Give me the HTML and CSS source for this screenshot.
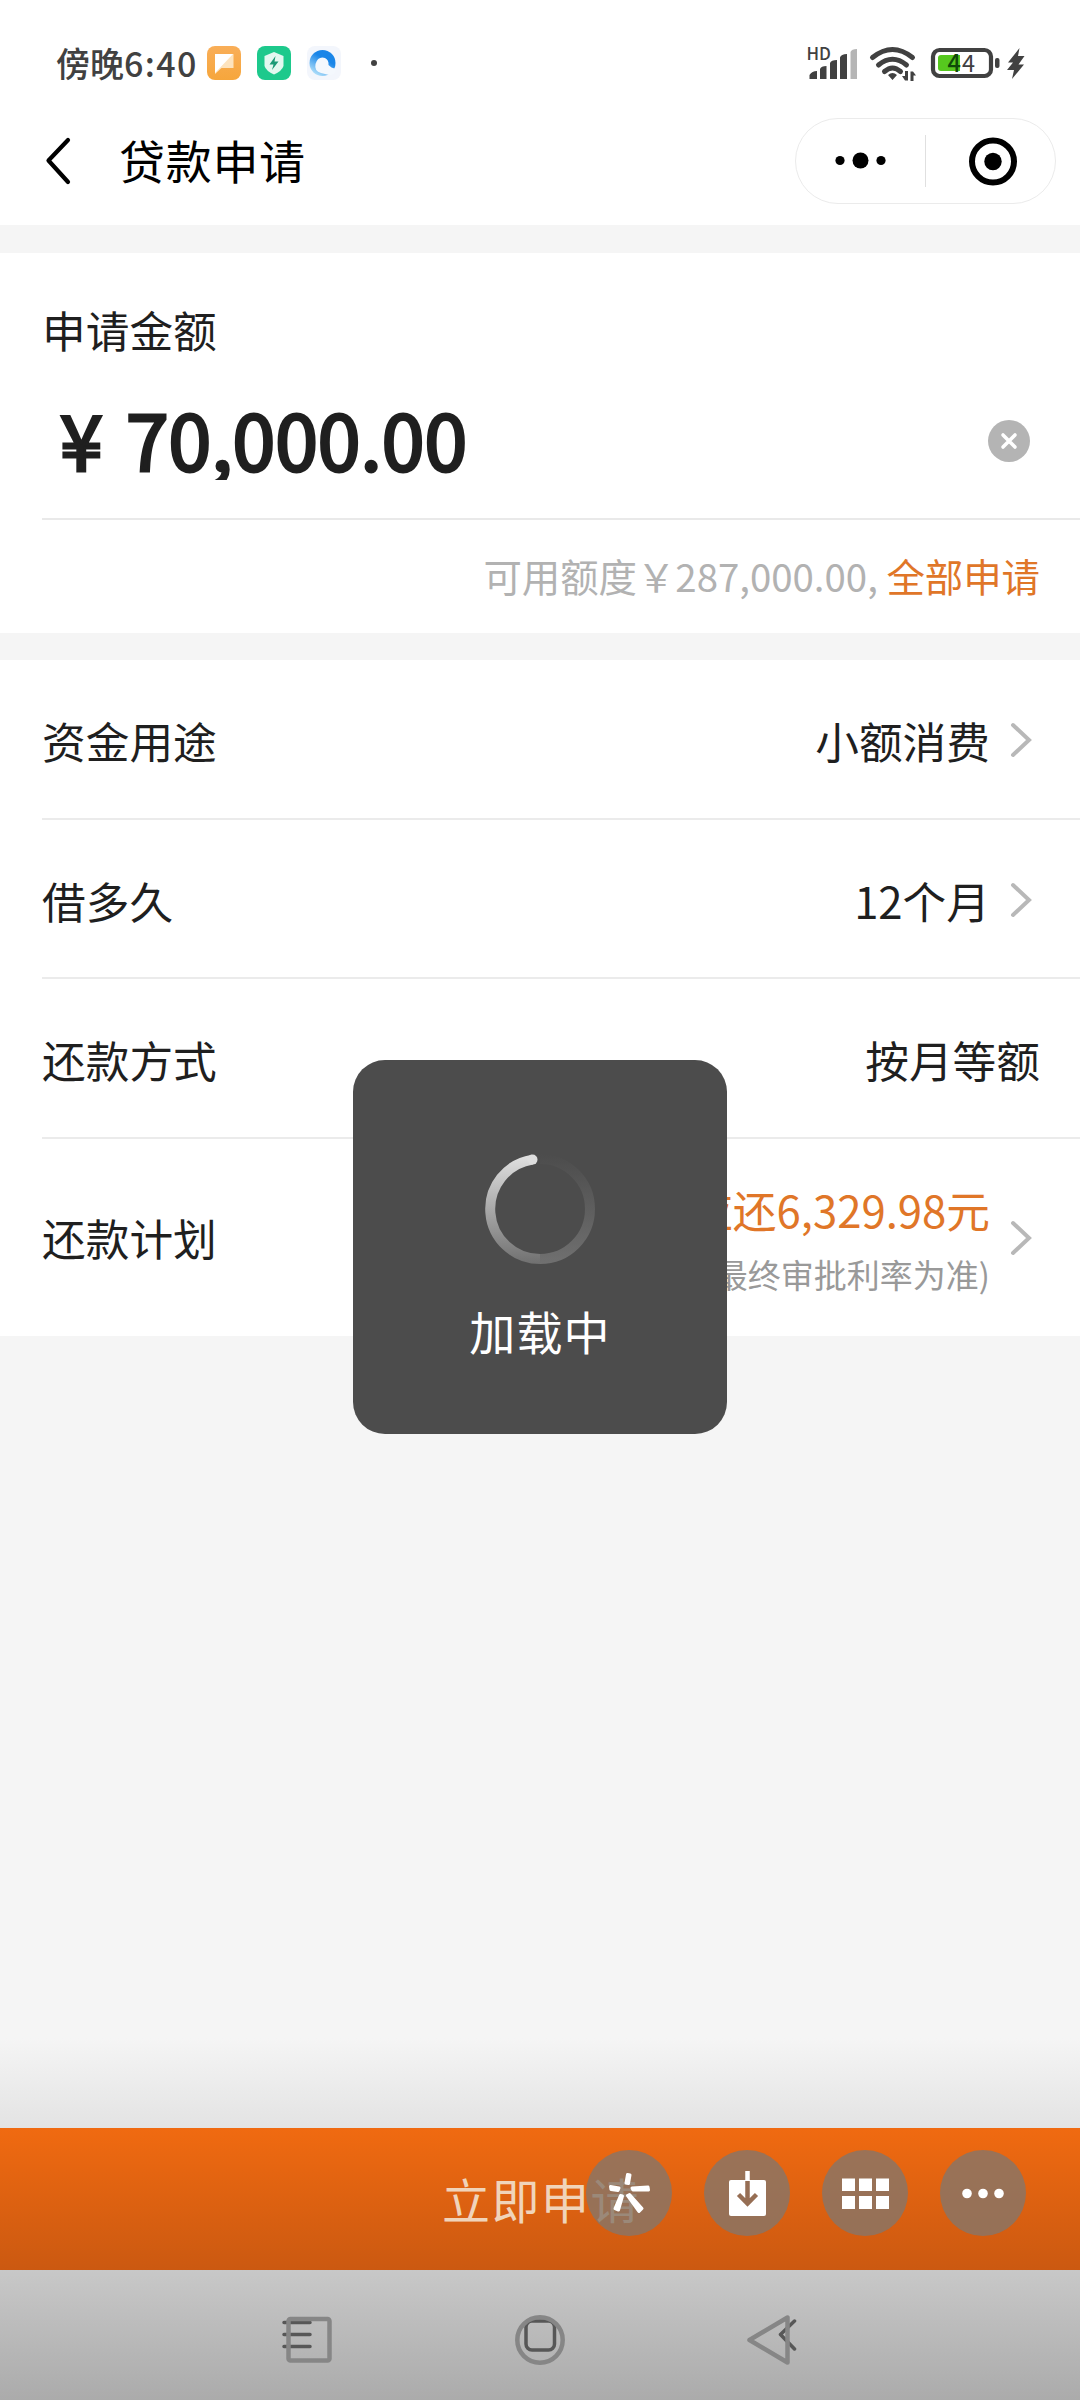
FILE: index.html
```html
<!DOCTYPE html>
<html lang="zh-CN">
<head>
<meta charset="utf-8">
<title>贷款申请</title>
<link rel="stylesheet" href="styles.css">
</head>
<body>
<div class="screen">
  <div class="status">
    <span class="clock">傍晚<span class="digits">6:40</span></span>
    <svg class="app-icon" viewBox="0 0 34 34"><defs><linearGradient id="og" x1="0" y1="0" x2="0" y2="1"><stop offset="0" stop-color="#f9ae58"/><stop offset="1" stop-color="#f6a63c"/></linearGradient></defs><rect width="34" height="34" rx="8" fill="url(#og)"/><path d="M8 8H26.500V22H14.500L8 28Z" fill="#fde3bd"/><path d="M8 8H26L8 27Z" fill="#fff"/></svg>
    <svg class="app-icon" viewBox="0 0 34 34"><rect width="34" height="34" rx="8" fill="#1dc98c"/><path d="M17 6L26.500 10V20Q25 25 17 28.500Q9 25 7.500 20V10Z" fill="#e2f8f0"/><path d="M18.500 10L12.500 18.500H16.500L15 24L21.500 15.500H17.500Z" fill="#1a9a76"/></svg>
    <svg class="app-icon" viewBox="0 0 34 34"><defs><linearGradient id="bg" x1="0.800" y1="0" x2="0.200" y2="1"><stop offset="0.350" stop-color="#1a86e8"/><stop offset="1" stop-color="#bfe8fb"/></linearGradient></defs><rect width="34" height="34" rx="8" fill="#f3f6fc"/><circle cx="15.500" cy="17" r="13" fill="url(#bg)"/><path d="M14 27Q7 25 8.500 18Q11 10 18 12Q22 14 21.500 19L24.500 21.500L29 23Q28 29 22 29Z" fill="#f4f8fd"/></svg>
    <i class="more-dot"></i>
    <svg class="signals" viewBox="800 40 230 46">
      <text class="hd" x="806.500" y="59.500">HD</text>
      <g fill="#414141"><path d="M809.500 79V75Q812 71 817 71V79ZM820 79V69Q821 66 826.500 66V79ZM830 79V63Q831 60 837 60V79ZM840 79V57.500Q841 54 847 54V79Z"/><path fill="#b5b5b5" d="M850.500 79V52Q851.500 49 857 49V79Z"/></g>
      <g fill="none" stroke="#414141" stroke-width="5" stroke-linecap="round"><path d="M872.500 57.500Q892.500 41.500 912.500 57.500M878.500 65Q892.500 53.500 906.500 65M884.500 71.500Q892.500 64.500 900.500 71.500"/></g>
      <path fill="#414141" d="M888 75Q892.500 71 897 75L892.500 80ZM905 71H908V80.500H905L902 76H905ZM910.500 81V71.500H913L916 75.500H913.500V81Z"/>
      <rect x="933" y="50" width="58" height="26" rx="6.500" fill="#fff" stroke="#414141" stroke-width="4.200"/>
      <path d="M941 55H960V71H941Q938 71 938 68V58Q938 55 941 55Z" fill="#56c81e"/>
      <text class="level" x="947.500" y="71.500"><tspan class="covered">4</tspan><tspan dx="1">4</tspan></text>
      <rect x="995" y="58" width="4.500" height="10" rx="2" fill="#414141"/>
      <path d="M1019.500 48L1008 62.500H1013L1007 70H1014L1012 79L1024 64.500H1018.500L1024.500 56H1018Z" fill="#414141"/>
    </svg>
  </div>

  <header class="nav">
    <svg class="back" viewBox="0 0 26 48"><path d="M23 3L3.500 23.500L23 45" fill="none" stroke="#000" stroke-width="4.200" stroke-linecap="round" stroke-linejoin="round"/></svg>
    <h1 class="title">贷款申请</h1>
    <div class="capsule">
      <svg viewBox="0 0 130 86"><circle cx="44" cy="42.500" r="4.600"/><circle cx="64.500" cy="42.500" r="8"/><circle cx="85" cy="42.500" r="4.600"/></svg>
      <i class="split"></i>
      <svg viewBox="0 0 130 86"><circle cx="67" cy="43.500" r="21" fill="none" stroke="#000" stroke-width="6"/><circle cx="67" cy="43.500" r="8.700"/></svg>
    </div>
  </header>

  <section class="amount-card">
    <div class="label">申请金额</div>
    <div class="amount-row">
      <div class="amount"><span class="yen">¥</span><span>70,000.00</span></div>
      <svg class="clear" viewBox="0 0 42 42"><circle cx="21" cy="21" r="21" fill="#b4b4b4"/><path d="M15 15L27 27M27 15L15 27" stroke="#fff" stroke-width="3.600" stroke-linecap="round"/></svg>
    </div>
    <div class="quota"><span>可用额度￥287,000.00,&nbsp;</span><a class="all">全部申请</a></div>
  </section>

  <section class="rows">
    <div class="row"><span>资金用途</span><span class="value">小额消费</span><svg class="arrow" viewBox="0 0 22 36"><path d="M3 3L19 18L3 33"/></svg></div>
    <div class="row"><span>借多久</span><span class="value">12个月</span><svg class="arrow" viewBox="0 0 22 36"><path d="M3 3L19 18L3 33"/></svg></div>
    <div class="row"><span>还款方式</span><span class="value">按月等额</span></div>
    <div class="row plan"><span>还款计划</span><div class="value"><div class="due">首期应还6,329.98元</div><div class="note">(以最终审批利率为准)</div></div><svg class="arrow" viewBox="0 0 22 36"><path d="M3 3L19 18L3 33"/></svg></div>
  </section>

  <div class="spacer"></div>

  <footer class="submit">立即申请</footer>
  <div class="sysnav">
    <svg viewBox="0 0 1080 130" fill="none" stroke-linejoin="round" stroke-linecap="round">
      <g stroke="#575757" stroke-width="3.500"><path d="M284 52.500H310M284 64.500H310M284 76.500H310M794.500 51L780.500 64.500L794.500 79"/><rect x="526" y="51" width="28.500" height="29" rx="6"/></g>
      <g stroke="#868686" stroke-width="4.500"><rect x="288.500" y="49" width="41" height="41.500" rx="2"/><circle cx="540" cy="70" r="22.700"/><path d="M787.500 47.500V92.500L749.500 70Z"/></g>
    </svg>
  </div>

  <div class="tools">
    <svg viewBox="0 0 86 86"><circle class="disc" cx="43" cy="43" r="43"/><path fill="#fff" stroke="#fff" stroke-width="3" stroke-linejoin="round" d="M41.500 24.500L44 25L42.500 33.500L40 33ZM24.500 36.500L33 38L32 40.500L25 39.500ZM46 38L62 37L62.500 40L47 40ZM41.500 45.500L43.500 44.500L56 58.500L53 61.500ZM34.500 45.500L36.500 46L32.500 60L29 58.500Z"/></svg>
    <svg viewBox="0 0 86 86"><circle class="disc" cx="43" cy="43" r="43"/><rect x="25" y="30" width="37" height="36" rx="2" fill="#fff"/><path d="M43.500 21V31" stroke="#fff" stroke-width="4.500"/><path d="M43.500 31V54M34.500 44.500L43.500 53.500L52.500 44.500" fill="none" stroke="#966e54" stroke-width="4.500"/></svg>
    <svg viewBox="0 0 86 86"><circle class="disc" cx="43" cy="43" r="43"/><path fill="#fff" d="M20 28.500H33V41H20ZM37 28.500H50V41H37ZM54 28.500H67V41H54ZM20 46H33V59H20ZM37 46H50V59H37ZM54 46H67V59H54Z"/></svg>
    <svg viewBox="0 0 86 86"><circle class="disc" cx="43" cy="43" r="43"/><g fill="#fff"><circle cx="27" cy="43.500" r="4.800"/><circle cx="43" cy="43.500" r="4.800"/><circle cx="59" cy="43.500" r="4.800"/></g></svg>
  </div>

  <div class="toast">
    <svg class="spinner" viewBox="0 0 110 110" fill="none" stroke-width="10">
      <defs>
        <linearGradient id="l" gradientUnits="userSpaceOnUse" x1="0" y1="0" x2="0" y2="110"><stop offset="0" stop-color="#e2e2e2"/><stop offset="1" stop-color="#707070"/></linearGradient>
        <linearGradient id="r" gradientUnits="userSpaceOnUse" x1="0" y1="0" x2="0" y2="110"><stop offset="0" stop-color="#4c4c4c"/><stop offset="1" stop-color="#707070"/></linearGradient>
      </defs>
      <path d="M55 5A50 50 0 0 1 55 105" stroke="url(#r)"/>
      <path d="M47.500 5.600A50 50 0 0 0 55 105" stroke="url(#l)"/>
      <circle cx="47.500" cy="5.600" r="5" fill="#dedede" stroke="none"/>
    </svg>
    <div class="toast-text">加载中</div>
  </div>
</div>
</body>
</html>
```
FILE: styles.css
```css
* { box-sizing: border-box; }
body {
  margin: 0;
  font-family: "Noto Sans CJK SC", sans-serif;
  color: #1f1f1f;
}
svg { display: block; overflow: visible; }
.screen {
  position: relative;
  display: flex;
  flex-direction: column;
  width: 1080px;
  height: 2400px;
  overflow: hidden;
  background: #f5f5f5;
}
.status {
  display: flex;
  align-items: center;
  height: 126px;
  flex: none;
  padding-left: 56px;
  background: #fff;
}
.clock {
  width: 151px;
  font-size: 34px;
  font-weight: 500;
  line-height: 50px;
  color: #414141;
  white-space: nowrap;
}
.digits { letter-spacing: 1.400px; }
.app-icon { width: 34px; height: 34px; margin-right: 16px; }
.more-dot {
  width: 6px;
  height: 6px;
  margin-left: 14px;
  border-radius: 50%;
  background: #414141;
}
.signals { width: 230px; height: 46px; margin-left: auto; margin-right: 50px; }
.hd { font: 500 17px "Noto Sans CJK SC", sans-serif; fill: #414141; }
.level { font: 400 23.500px "Noto Sans CJK SC", sans-serif; fill: #414141; }
.covered { font-weight: 500; fill: #104a08; }
.nav {
  display: flex;
  align-items: flex-start;
  height: 99px;
  flex: none;
  padding-left: 45px;
  background: #fff;
}
.back { width: 26px; height: 48px; margin-top: 11px; }
.title {
  margin: -2px 0 0 48px;
  font-size: 46px;
  font-weight: 400;
  line-height: 70px;
  letter-spacing: .7px;
  color: #000;
}
.capsule {
  display: flex;
  align-items: center;
  width: 261px;
  height: 86px;
  margin: -8px 24px 0 auto;
  border: 1.500px solid #ebebeb;
  border-radius: 43px;
}
.capsule svg { width: 130px; height: 86px; margin-right: -1px; }
.split { width: 1px; height: 52px; flex: none; background: #e0e0e0; }
.amount-card {
  height: 380px;
  flex: none;
  margin-top: 28px;
  padding: 44px 0 0 42px;
  background: #fff;
}
.label { font-size: 43.700px; line-height: 64px; }
.amount-row {
  display: flex;
  align-items: center;
  justify-content: space-between;
  height: 159px;
  padding-right: 50px;
  border-bottom: 2px solid #e9e9e9;
}
.amount {
  display: flex;
  height: 80px;
  overflow: hidden;
  padding-left: 18px;
  font-size: 76.800px;
  line-height: 75px;
  -webkit-text-stroke: 3px #1f1f1f;
}
.yen { width: 66px; }
.clear { width: 42px; height: 42px; margin-top: 2px; }
.quota {
  display: flex;
  justify-content: flex-end;
  padding: 26px 40px 0 0;
  font-size: 38.400px;
  line-height: 58px;
  color: #b2b2b2;
}
.all { color: #e07628; }
.rows {
  flex: none;
  height: 676px;
  margin-top: 27px;
  padding-left: 42px;
  background: #fff;
  font-size: 43.700px;
}
.row {
  display: flex;
  align-items: center;
  height: 159.300px;
  padding-right: 40px;
  border-bottom: 2.500px solid #ebebeb;
  line-height: 64px;
}
.row:first-child { height: 160px; }
.row > span:first-child { flex: 1; padding-top: 2px; }
.value { text-align: right; padding-top: 2px; }
.row.plan { height: 197px; border-bottom: 0; }
.row.plan > span:first-child { padding-top: 0; }
.due { color: #e07628; line-height: 64px; }
.note { font-size: 33px; line-height: 50px; color: #999; padding-top: 8px; }
.arrow { width: 22px; height: 36px; margin: 2px 8px 0 20px; }
.arrow path { fill: none; stroke: #b8b8b8; stroke-width: 4px; stroke-linecap: round; }
.spacer {
  flex: 1;
  background: linear-gradient(#f5f5f5 calc(100% - 90px), #e3e3e3);
}
.submit {
  height: 142px;
  flex: none;
  padding: 35px 0 0 442px;
  background: linear-gradient(#f06a11, #cb5911);
  font-size: 48px;
  line-height: 70px;
  letter-spacing: 1.500px;
  color: #f0d4ba;
}
.sysnav {
  height: 130px;
  flex: none;
  background: linear-gradient(#c8c8c8, #ababab);
}
.tools {
  position: absolute;
  left: 586px;
  top: 2150px;
  display: flex;
  gap: 32px;
}
.tools svg { width: 86px; height: 86px; }
.disc { fill: rgba(134, 118, 105, .8); }
.toast {
  position: absolute;
  left: 353px;
  top: 1060px;
  display: flex;
  flex-direction: column;
  align-items: center;
  width: 374px;
  height: 374px;
  padding-top: 94px;
  border-radius: 32px;
  background: #4c4c4c;
}
.spinner { width: 110px; height: 110px; }
.toast-text {
  margin-top: 31px;
  font-size: 46px;
  line-height: 70px;
  letter-spacing: 1.200px;
  color: #fff;
}
```
